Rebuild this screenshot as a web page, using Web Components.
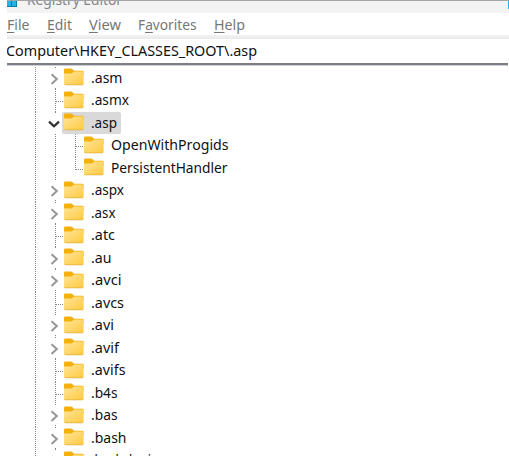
<!DOCTYPE html>
<html lang="en"><head><meta charset="utf-8"><title>Registry Editor</title>
<style>html,body{margin:0;height:100%;overflow:hidden;background:#fff}</style></head>
<body><registry-window></registry-window>
<script>
class FitText extends HTMLElement{
  connectedCallback(){
    const r=this.attachShadow({mode:'open'});
    r.innerHTML='<style>:host{display:block;white-space:nowrap}span{display:inline-block;transform-origin:0 50%}u{text-underline-offset:2px;text-decoration-thickness:1px;text-decoration-skip-ink:none}</style><span></span>';
    const s=r.querySelector('span'),t=this.getAttribute('text'),k=this.getAttribute('key');
    if(k!==null){const i=+k,u=document.createElement('u');u.textContent=t[i];s.append(t.slice(0,i),u,t.slice(i+1));}
    else s.textContent=t;
    const w=+this.getAttribute('w');
    this.style.width=w+'px';
    s.style.transform=`scaleX(${w/s.getBoundingClientRect().width})`;
  }
}
customElements.define('fit-text',FitText);

class FolderIcon extends HTMLElement{
  connectedCallback(){
    this.attachShadow({mode:'open'}).innerHTML=`<style>:host{display:block;width:20px;height:18px;flex:none}svg{display:block}</style>
    <svg width="20" height="18" viewBox="0 0 20 18"><defs><linearGradient id="g" x1="0" y1="0" x2="1" y2="1"><stop offset="0" stop-color="#ffe49a"/><stop offset="1" stop-color="#ffca3e"/></linearGradient></defs>
    <path d="M0 2Q0 .6 1.4.6H7Q8 .6 8.8 1.5L10 2.7H18.4Q19.6 2.7 19.6 4V8H0Z" fill="#f4b10b"/>
    <path d="M0 5.4H7.2Q8 5.4 8.7 4.8L9.5 4Q10.2 3.4 11 3.4H18.4Q19.6 3.4 19.6 4.6V15.4Q19.6 17 18 17H1.6Q0 17 0 15.4Z" fill="url(#g)"/>
    <path d="M.4 16.2Q.9 16.8 1.6 16.8H18Q18.8 16.8 19.3 16.2" fill="none" stroke="#e3b23d" stroke-width=".8"/></svg>`;
  }
}
customElements.define('folder-icon',FolderIcon);

class TreeRow extends HTMLElement{
  connectedCallback(){
    const st=this.getAttribute('state'),child=this.hasAttribute('child'),last=this.hasAttribute('last');
    const dot='stroke="#858585" stroke-dasharray="1 1" fill="none" shape-rendering="crispEdges"';
    let lines=`<path d="M29.5 0V23" ${dot}/>`;
    if(st==='leaf'&&!child)lines+=`<path d="M49.5 0V23M50 12.5H58" ${dot}/>`;
    if(child)lines+=`<path d="M49.5 0V23M69.5 0V${last?13:23}M70 12.5H78" ${dot}/>`;
    if(st==='closed')lines+=`<path d="M49.5 0V2M49.5 21V23" ${dot}/><path d="M45.5 7.3L50.8 12.1L45.5 16.9" fill="none" stroke="#969696" stroke-width="2"/>`;
    if(st==='open')lines+=`<path d="M49.5 0V2" ${dot}/><path d="M43 9.6L48 14.3L53 9.6" fill="none" stroke="#303030" stroke-width="2.2"/>`;
    this.attachShadow({mode:'open'}).innerHTML=`<style>
    :host{display:grid;grid-template-columns:${child?76:56}px max-content;height:22.5px;flex:none}
    svg{display:block;overflow:visible}
    .item{display:flex;align-items:center;height:22.5px;gap:6.6px;padding:0 4.5px 0 2.2px;border-radius:2px;box-sizing:border-box}
    .sel{background:#d9d9d9}
    folder-icon{margin-top:-1px}
    fit-text{line-height:22px}
    </style><svg width="50" height="22.5">${lines}</svg><div class="item ${st==='open'?'sel':''}"><folder-icon></folder-icon><fit-text text="${this.getAttribute('name')}" w="${this.getAttribute('w')}"></fit-text></div>`;
  }
}
customElements.define('tree-row',TreeRow);

class RegistryWindow extends HTMLElement{
  connectedCallback(){
    const rows=[['.asm',31.5,'closed'],['.asmx',38,'leaf'],['.asp',26,'open'],['OpenWithProgids',117.5,'leaf','child'],['PersistentHandler',116.5,'leaf','child last'],['.aspx',33,'closed'],['.asx',24.5,'closed'],['.atc',24,'leaf'],['.au',20.5,'closed'],['.avci',30.5,'closed'],['.avcs',33,'leaf'],['.avi',23,'closed'],['.avif',28,'closed'],['.avifs',34.5,'leaf'],['.b4s',26.5,'leaf'],['.bas',26.5,'closed'],['.bash',35.5,'closed'],['.bash_login',68,'closed']];
    const menu=[['File',22.5,0],['Edit',25,0],['View',32,0],['Favorites',58.5,1],['Help',31,0]];
    this.attachShadow({mode:'open'}).innerHTML=`<style>
    :host{display:flex;flex-direction:column;width:502px;height:456px;margin-left:7px;overflow:hidden;font:14px/22px "Noto Sans","Open Sans",sans-serif;color:#111}
    .title{display:flex;justify-content:space-between;height:13px;box-sizing:border-box;border-top:1px solid #a4a4a4;background:#f3f3f3;overflow:hidden;color:#858585;flex:none}
    .title fit-text{margin:-12px auto 0 10px}
    .title svg{display:block;flex:none}
    .menu{display:flex;height:22px;gap:17.3px;color:#777;flex:none}
    .menu fit-text{line-height:24px}
    .band{height:4px;background:linear-gradient(#f3f3f3,#e9e9e9);flex:none}
    .address{height:26px;box-sizing:border-box;flex:none;margin-right:1px;border-bottom:2px solid #7d7f85;box-shadow:0 1px #cbd0d7}
    .address fit-text{line-height:23px;margin-left:-1px}
    .tree{display:flex;flex-direction:column;padding-top:1.5px;overflow:hidden;flex:1;margin-left:-1px;box-sizing:border-box}
    </style>
    <div class="title"><svg width="10" height="7"><path d="M0 0H10V6H0Z" fill="#087da9"/><path d="M0 0H4V5H0ZM5 0H9V5H5Z" fill="#24b5e8"/></svg><fit-text text="Registry Editor" w="95"></fit-text><svg width="1" height="8"><path d="M0 0H1V8H0Z" fill="#24b5e8"/></svg></div>
    <div class="menu">${menu.map(m=>`<fit-text text="${m[0]}" w="${m[1]}" key="${m[2]}"></fit-text>`).join('')}</div>
    <div class="band"></div><div class="address"><fit-text text="Computer\\HKEY_CLASSES_ROOT\\.asp" w="251"></fit-text></div>
    <div class="tree">${rows.map(r=>`<tree-row name="${r[0]}" w="${r[1]}" state="${r[2]}" ${r[3]||''}></tree-row>`).join('')}</div>`;
  }
}
customElements.define('registry-window',RegistryWindow);
</script></body></html>
